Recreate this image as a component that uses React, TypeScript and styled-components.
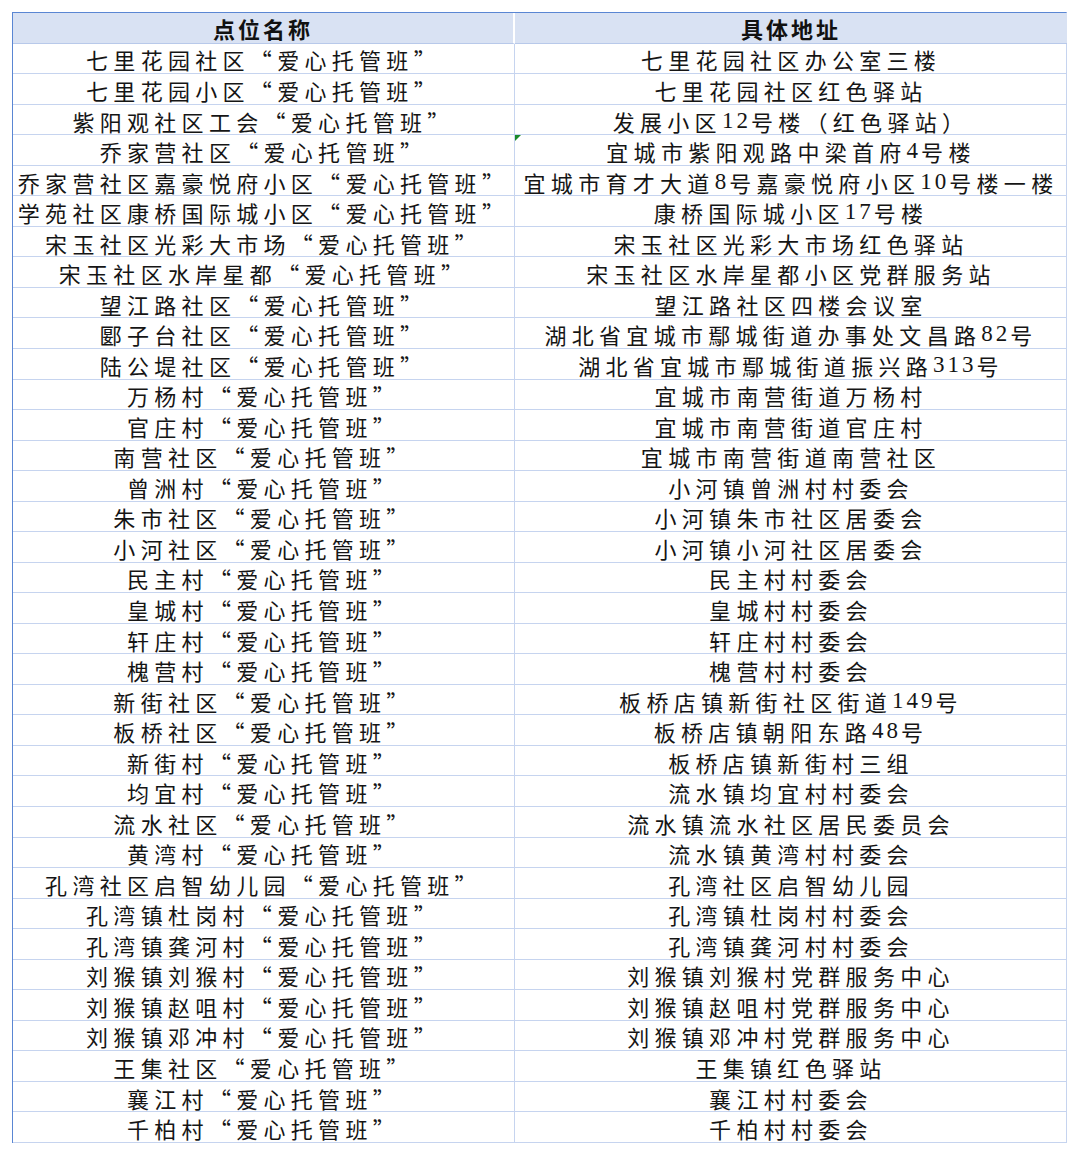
import React from "react";
import styled, { createGlobalStyle } from "styled-components";

const Global = createGlobalStyle`
  html, body { margin: 0; padding: 0; background: #ffffff; }
  body { width: 1080px; height: 1155px; overflow: hidden; }
`;

const Page = styled.div`
  padding: 12px 0 0 12px;
  box-sizing: border-box;
  width: 1080px;
  height: 1155px;
  background: #ffffff;
`;

const Sheet = styled.div`
  display: grid;
  grid-template-columns: 502px 552px;
  width: 1055px;
  box-sizing: border-box;
  border-top: 1px solid #5a86d3;
  border-left: 1px solid #5a86d3;
  border-right: 1px solid #c6d4ef;
`;

const HeadCell = styled.div<{ $first?: boolean }>`
  height: 30.7px;
  box-sizing: border-box;
  background: #d9e2f3;
  border-bottom: 1px solid #b8c9ea;
  border-right: ${(p) => (p.$first ? "2px solid #ffffff" : "none")};
  display: flex;
  align-items: center;
  justify-content: center;
  font-family: "Noto Sans CJK SC", "Noto Sans", sans-serif;
  font-weight: 700;
  font-size: 22px;
  letter-spacing: 3px;
  color: #111111;
  padding-top: 1px;
`;

const Cell = styled.div<{ $first?: boolean }>`
  position: relative;
  height: 30.54px;
  box-sizing: border-box;
  border-bottom: 1px solid #c6d4ef;
  border-right: ${(p) => (p.$first ? "1.5px solid #c6d4ef" : "none")};
  display: flex;
  align-items: center;
  justify-content: center;
  white-space: nowrap;
  font-family: "Noto Sans CJK SC", "Noto Sans", sans-serif;
  font-feature-settings: "fwid";
  font-weight: 400;
  font-size: 22px;
  letter-spacing: 5.3px;
  color: #151515;
  padding-top: 2px;
`;

const Num = styled.span`
  font-family: "Liberation Serif", "DejaVu Serif", serif;
  font-size: 23px;
  letter-spacing: 3px;
`;

const Marker = styled.span`
  position: absolute;
  left: 0;
  top: 0;
  width: 0;
  height: 0;
  border-top: 6px solid #1a8a2a;
  border-right: 6px solid transparent;
`;

const rows: [string, string][] = [
  ["七里花园社区“爱心托管班”", "七里花园社区办公室三楼"],
  ["七里花园小区“爱心托管班”", "七里花园社区红色驿站"],
  ["紫阳观社区工会“爱心托管班”", "发展小区12号楼（红色驿站）"],
  ["乔家营社区“爱心托管班”", "宜城市紫阳观路中梁首府4号楼"],
  ["乔家营社区嘉豪悦府小区“爱心托管班”", "宜城市育才大道8号嘉豪悦府小区10号楼一楼"],
  ["学苑社区康桥国际城小区“爱心托管班”", "康桥国际城小区17号楼"],
  ["宋玉社区光彩大市场“爱心托管班”", "宋玉社区光彩大市场红色驿站"],
  ["宋玉社区水岸星都“爱心托管班”", "宋玉社区水岸星都小区党群服务站"],
  ["望江路社区“爱心托管班”", "望江路社区四楼会议室"],
  ["郾子台社区“爱心托管班”", "湖北省宜城市鄢城街道办事处文昌路82号"],
  ["陆公堤社区“爱心托管班”", "湖北省宜城市鄢城街道振兴路313号"],
  ["万杨村“爱心托管班”", "宜城市南营街道万杨村"],
  ["官庄村“爱心托管班”", "宜城市南营街道官庄村"],
  ["南营社区“爱心托管班”", "宜城市南营街道南营社区"],
  ["曾洲村“爱心托管班”", "小河镇曾洲村村委会"],
  ["朱市社区“爱心托管班”", "小河镇朱市社区居委会"],
  ["小河社区“爱心托管班”", "小河镇小河社区居委会"],
  ["民主村“爱心托管班”", "民主村村委会"],
  ["皇城村“爱心托管班”", "皇城村村委会"],
  ["轩庄村“爱心托管班”", "轩庄村村委会"],
  ["槐营村“爱心托管班”", "槐营村村委会"],
  ["新街社区“爱心托管班”", "板桥店镇新街社区街道149号"],
  ["板桥社区“爱心托管班”", "板桥店镇朝阳东路48号"],
  ["新街村“爱心托管班”", "板桥店镇新街村三组"],
  ["均宜村“爱心托管班”", "流水镇均宜村村委会"],
  ["流水社区“爱心托管班”", "流水镇流水社区居民委员会"],
  ["黄湾村“爱心托管班”", "流水镇黄湾村村委会"],
  ["孔湾社区启智幼儿园“爱心托管班”", "孔湾社区启智幼儿园"],
  ["孔湾镇杜岗村“爱心托管班”", "孔湾镇杜岗村村委会"],
  ["孔湾镇龚河村“爱心托管班”", "孔湾镇龚河村村委会"],
  ["刘猴镇刘猴村“爱心托管班”", "刘猴镇刘猴村党群服务中心"],
  ["刘猴镇赵咀村“爱心托管班”", "刘猴镇赵咀村党群服务中心"],
  ["刘猴镇邓冲村“爱心托管班”", "刘猴镇邓冲村党群服务中心"],
  ["王集社区“爱心托管班”", "王集镇红色驿站"],
  ["襄江村“爱心托管班”", "襄江村村委会"],
  ["千柏村“爱心托管班”", "千柏村村委会"],
];

function Text({ value }: { value: string }) {
  const parts = value.split(/(\d+)/);
  return (
    <>
      {parts.map((p, i) =>
        /^\d+$/.test(p) ? <Num key={i}>{p}</Num> : <React.Fragment key={i}>{p}</React.Fragment>
      )}
    </>
  );
}

export default function App() {
  return (
    <Page>
      <Global />
      <Sheet>
        <HeadCell $first>点位名称</HeadCell>
        <HeadCell>具体地址</HeadCell>
        {rows.map(([name, addr], i) => (
          <React.Fragment key={i}>
            <Cell $first>
              <Text value={name} />
            </Cell>
            <Cell>
              {i === 3 && <Marker />}
              <Text value={addr} />
            </Cell>
          </React.Fragment>
        ))}
      </Sheet>
    </Page>
  );
}
